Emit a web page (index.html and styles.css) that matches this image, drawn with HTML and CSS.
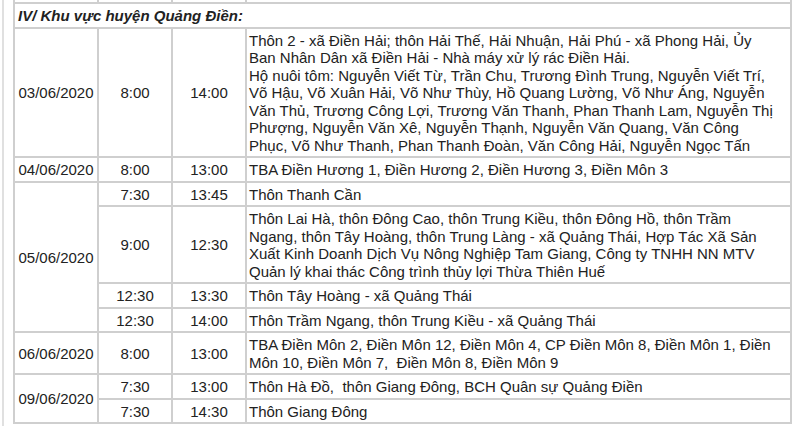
FILE: index.html
```html
<!DOCTYPE html>
<html lang="vi">
<head>
<meta charset="utf-8">
<title>Lịch cắt điện</title>
<link rel="stylesheet" href="styles.css">
</head>
<body>
<div class="page">
<table class="sched">
<colgroup><col class="c-date"><col class="c-time"><col class="c-time"><col class="c-place"></colgroup>
<tr class="stub"><td></td><td></td><td></td><td></td></tr>
<tr><td colspan="4" class="title">IV/ Khu vực huyện Quảng Điền:</td></tr>
<tr>
<td class="date">03/06/2020</td><td class="time">8:00</td><td class="time">14:00</td>
<td class="place">Thôn 2 - xã Điền Hải; thôn Hải Thế, Hải Nhuận, Hải Phú - xã Phong Hải, Ủy<br>Ban Nhân Dân xã Điền Hải - Nhà máy xử lý rác Điền Hải.<br>Hộ nuôi tôm: Nguyễn Viết Từ, Trần Chu, Trương Đình Trung, Nguyễn Viết Trí,<br>Võ Hậu, Võ Xuân Hải, Võ Như Thùy, Hồ Quang Lường, Võ Như Áng, Nguyễn<br>Văn Thủ, Trương Công Lợi, Trương Văn Thanh, Phan Thanh Lam, Nguyễn Thị<br>Phượng, Nguyễn Văn Xê, Nguyễn Thạnh, Nguyễn Văn Quang, Văn Công<br>Phục, Võ Như Thanh, Phan Thanh Đoàn, Văn Công Hải, Nguyễn Ngọc Tấn</td>
</tr>
<tr>
<td class="date">04/06/2020</td><td class="time">8:00</td><td class="time">13:00</td>
<td class="place">TBA Điền Hương 1, Điền Hương 2, Điền Hương 3, Điền Môn 3</td>
</tr>
<tr>
<td class="date" rowspan="4">05/06/2020</td><td class="time">7:30</td><td class="time">13:45</td>
<td class="place">Thôn Thanh Cần</td>
</tr>
<tr>
<td class="time">9:00</td><td class="time">12:30</td>
<td class="place">Thôn Lai Hà, thôn Đông Cao, thôn Trung Kiều, thôn Đông Hồ, thôn Trầm<br>Ngang, thôn Tây Hoàng, thôn Trung Làng - xã Quảng Thái, Hợp Tác Xã Sản<br>Xuất Kinh Doanh Dịch Vụ Nông Nghiệp Tam Giang, Công ty TNHH NN MTV<br>Quản lý khai thác Công trình thủy lợi Thừa Thiên Huế</td>
</tr>
<tr>
<td class="time">12:30</td><td class="time">13:30</td>
<td class="place">Thôn Tây Hoàng - xã Quảng Thái</td>
</tr>
<tr>
<td class="time">12:30</td><td class="time">14:00</td>
<td class="place">Thôn Trầm Ngang, thôn Trung Kiều - xã Quảng Thái</td>
</tr>
<tr>
<td class="date">06/06/2020</td><td class="time">8:00</td><td class="time">13:00</td>
<td class="place">TBA Điền Môn 2, Điền Môn 12, Điền Môn 4, CP Điền Môn 8, Điền Môn 1, Điền<br>Môn 10, Điền Môn 7,&nbsp; Điền Môn 8, Điền Môn 9</td>
</tr>
<tr>
<td class="date" rowspan="2">09/06/2020</td><td class="time">7:30</td><td class="time">13:00</td>
<td class="place">Thôn Hà Đồ,&nbsp; thôn Giang Đông, BCH Quân sự Quảng Điền</td>
</tr>
<tr>
<td class="time">7:30</td><td class="time">14:30</td>
<td class="place">Thôn Giang Đông</td>
</tr>
</table>
</div>
</body>
</html>
```
FILE: styles.css
```css
html, body {
  margin: 0;
  padding: 0;
  background: #ffffff;
}
.page {
  margin-left: 2px;
  border-left: 2px solid #e0e0e0;
  padding-left: 9px;
  height: 426px;
  overflow: hidden;
  font-family: "Liberation Sans", Arial, sans-serif;
  font-size: 15px;
  color: #222222;
}
.sched {
  border-collapse: collapse;
  table-layout: fixed;
  width: 777px;
}
.c-date { width: 84px; }
.c-time { width: 74px; }
.c-place { width: 545px; }
.sched td {
  border: 2px solid #cfcfcf;
  padding: 3px 2px 2px 2px;
  line-height: 17.5px;
  vertical-align: middle;
}
.sched .stub td {
  border-top: 0;
  height: 2px;
  padding: 0;
}
.sched td.title {
  font-weight: bold;
  font-style: italic;
  padding: 3px 3px 2px 3px;
}
.sched td.date,
.sched td.time {
  text-align: center;
}
.sched td.date {
  padding-left: 0;
  padding-right: 0;
}
.sched td.place {
  white-space: nowrap;
  padding-left: 2px;
}
```
